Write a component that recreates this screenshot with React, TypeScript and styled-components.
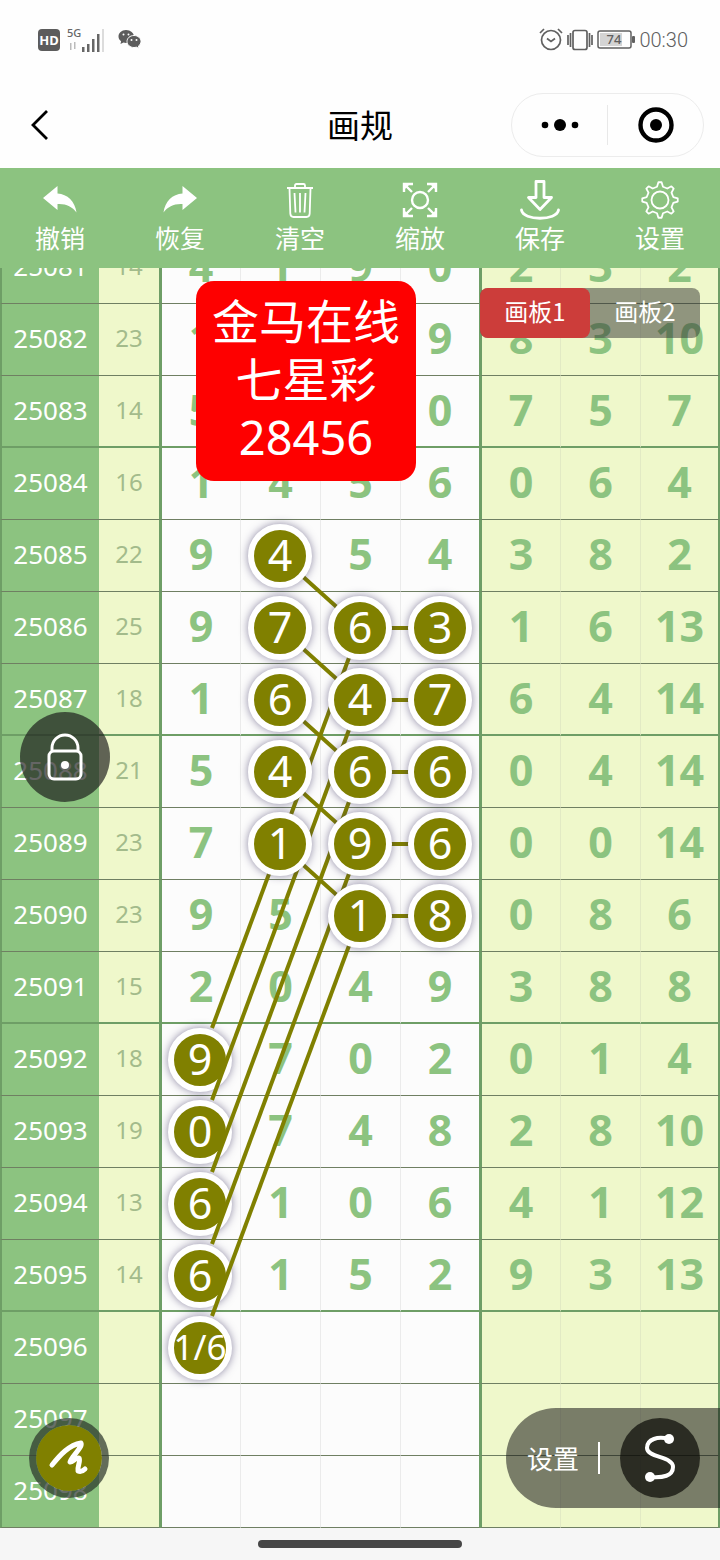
import React from "react";
import styled, { createGlobalStyle, css } from "styled-components";

const FONT = '"Noto Sans", "Noto Sans CJK SC", sans-serif';
const GREEN = "#8cc380";
const LINE = "#6e9e66";
const RULE = "#6f7f62";
const OLIVE = "#808000";
const ROW = 72;
const HIDDEN = 36;

const GlobalStyle = createGlobalStyle`
  * { box-sizing: border-box; }
  body { margin: 0; background: #f6f6f6; font-family: ${FONT}; }
  button { font: inherit; color: inherit; background: none; border: 0; padding: 0; margin: 0; cursor: pointer; }
`;

const Page = styled.div`
  min-height: 100vh;
  display: flex;
  flex-direction: column;
  background: #f6f6f6;
`;

const StatusBar = styled.header`
  height: 82px;
  padding: 0 32px 2px 38px;
  display: flex;
  align-items: center;
  justify-content: space-between;
  background: #fefefe;
  color: #606060;
`;

const StatusGroup = styled.div<{ $gap: number }>`
  display: flex;
  align-items: center;
  gap: ${(p) => p.$gap}px;
`;

const HdBadge = styled.span`
  width: 22px;
  height: 22px;
  border-radius: 4px;
  background: #5c5c5c;
  color: #fff;
  font: 700 13px/22px "Noto Sans", sans-serif;
  text-align: center;
`;

const Clock = styled.time`
  font: 300 20px/24px Roboto, sans-serif;
`;

const NavBar = styled.nav`
  height: 86px;
  padding: 0 16px;
  display: grid;
  grid-template-columns: 1fr auto 1fr;
  align-items: center;
  background: #fefefe;
`;

const BackButton = styled.button`
  && { margin-left: 8px; }
  width: 32px;
  height: 40px;
  display: flex;
  align-items: center;
  justify-content: center;
`;

const Title = styled.h1`
  margin: 0;
  padding-bottom: 2px;
  font: 400 33px/40px "Noto Sans CJK SC", sans-serif;
  color: #000;
`;

const Capsule = styled.div`
  justify-self: end;
  width: 193px;
  height: 64px;
  display: flex;
  align-items: center;
  border: 1px solid #ececec;
  border-radius: 32px;
`;

const CapsuleButton = styled.button`
  flex: 1;
  height: 40px;
  display: flex;
  align-items: center;
  justify-content: center;
  & + & { border-left: 1px solid #e8e8e8; }
`;

const Toolbar = styled.div`
  height: 100px;
  display: grid;
  grid-template-columns: repeat(6, 1fr);
  background: ${GREEN};
`;

const Tool = styled.button`
  && { color: #fff; padding-top: 11px; }
  display: flex;
  flex-direction: column;
  align-items: center;
  svg { display: block; }
  span { font: 400 25px/32px "Noto Sans CJK SC", sans-serif; }
`;

const Board = styled.main`
  position: relative;
  overflow: hidden;
`;

const Chart = styled.table`
  width: 100%;
  margin-top: -${HIDDEN}px;
  border-collapse: separate;
  border-spacing: 0;
  table-layout: fixed;
`;

const Row = styled.tr<{ $thick: boolean }>`
  > * {
    height: ${ROW}px;
    padding: 0 0 ${(p) => (p.$thick ? 2 : 3)}px;
    text-align: center;
    vertical-align: middle;
    border-bottom: ${(p) => (p.$thick ? `2px solid ${LINE}` : `1px solid ${RULE}`)};
  }
`;

const Period = styled.th`
  background: ${GREEN};
  border-left: 2px solid ${LINE};
  color: #fff;
  font: 400 26px/32px ${FONT};
`;

const Sum = styled.td`
  background: #eff8cb;
  border-right: 1px solid ${LINE};
  color: #a3bb8b;
  font: 400 24px/32px ${FONT};
`;

const Digit = styled.td<{ $col: number }>`
  background: ${(p) => (p.$col > 3 ? "#eff8cb" : "#fcfcfc")};
  color: ${GREEN};
  font: 700 43px/56px ${FONT};
  ${(p) =>
    p.$col % 4 === 0
      ? css`border-left: 2px solid ${LINE};`
      : css`border-left: 1px solid ${p.$col > 3 ? "#e2eac4" : "#ebebeb"};`}
  ${(p) => p.$col === 3 && css`border-right: 1px solid ${LINE};`}
  ${(p) => p.$col === 6 && css`border-right: 2px solid ${LINE};`}
`;

const Overlay = styled.svg`
  position: absolute;
  left: 0;
  top: 0;
  width: 100%;
  height: 100%;
  pointer-events: none;
`;

const Mark = styled.span<{ $col: number; $row: number; $small?: boolean }>`
  position: absolute;
  left: calc(100% * ${(p) => 5 + 2 * p.$col} / 18);
  top: ${(p) => p.$row * ROW}px;
  transform: translate(-50%, -50%);
  width: 64px;
  height: 64px;
  padding-bottom: 2px;
  border: 6px solid #fff;
  border-radius: 50%;
  background: ${OLIVE};
  box-shadow: 0 0 9px rgba(50, 40, 90, 0.55);
  color: #fff;
  display: flex;
  align-items: center;
  justify-content: center;
  font: 400 ${(p) => (p.$small ? 35 : 43)}px/52px ${FONT};
  white-space: nowrap;
`;

const Banner = styled.aside`
  position: absolute;
  left: calc(100% * 49 / 180);
  top: 13px;
  width: 220px;
  height: 200px;
  padding-top: 11px;
  border-radius: 18px;
  background: #fe0000;
  color: #fff;
  text-align: center;
  font: 400 47px/58px ${FONT};
  p { margin: 0; }
`;

const Tabs = styled.div`
  position: absolute;
  right: 20px;
  top: 20px;
  display: flex;
  border-radius: 8px;
  background: rgba(50, 50, 50, 0.5);
`;

const Tab = styled.button<{ $active?: boolean }>`
  && {
    width: 110px;
    height: 50px;
    border-radius: 8px;
    color: #fff;
    font: 400 24px/46px "Noto Sans CJK SC", sans-serif;
    padding-bottom: 4px;
    ${(p) => p.$active && css`background: #cc3d3a;`}
  }
`;

const LockButton = styled.button`
  && {
    position: absolute;
    left: 20px;
    top: 444px;
    width: 90px;
    height: 90px;
    border-radius: 50%;
    background: rgba(25, 25, 25, 0.67);
    display: flex;
    align-items: center;
    justify-content: center;
  }
`;

const PenButton = styled.button`
  && {
    position: absolute;
    left: 29px;
    bottom: 30px;
    width: 80px;
    height: 80px;
    border-radius: 50%;
    border: 7px solid rgba(40, 50, 40, 0.7);
    background: ${OLIVE};
    background-clip: padding-box;
    display: flex;
    align-items: center;
    justify-content: center;
  }
`;

const Dock = styled.div`
  position: absolute;
  right: 0;
  bottom: 20px;
  height: 100px;
  padding: 0 20px 0 21px;
  display: flex;
  align-items: center;
  border-radius: 50px 0 0 50px;
  background: rgba(20, 20, 20, 0.54);
`;

const DockLabel = styled.button`
  && {
    height: 32px;
    padding-right: 19px;
    margin-right: 20px;
    border-right: 2px solid #fff;
    color: #fff;
    font: 400 26px/30px "Noto Sans CJK SC", sans-serif;
  }
`;

const DockRound = styled.button`
  && {
    width: 80px;
    height: 80px;
    border-radius: 50%;
    background: rgba(10, 10, 5, 0.7);
    display: flex;
    align-items: center;
    justify-content: center;
  }
`;

const HomeArea = styled.footer`
  height: 32px;
  display: flex;
  align-items: center;
  justify-content: center;
`;

const HomeBar = styled.span`
  width: 204px;
  height: 8px;
  border-radius: 4px;
  background: #474747;
`;

const ROWS: [string, string, string][] = [
  ["25081", "14", "4 1 9 0 2 3 2"],
  ["25082", "23", "1 6 7 9 8 3 10"],
  ["25083", "14", "5 7 2 0 7 5 7"],
  ["25084", "16", "1 4 5 6 0 6 4"],
  ["25085", "22", "9 4 5 4 3 8 2"],
  ["25086", "25", "9 7 6 3 1 6 13"],
  ["25087", "18", "1 6 4 7 6 4 14"],
  ["25088", "21", "5 4 6 6 0 4 14"],
  ["25089", "23", "7 1 9 6 0 0 14"],
  ["25090", "23", "9 5 1 8 0 8 6"],
  ["25091", "15", "2 0 4 9 3 8 8"],
  ["25092", "18", "9 7 0 2 0 1 4"],
  ["25093", "19", "0 7 4 8 2 8 10"],
  ["25094", "13", "6 1 0 6 4 1 12"],
  ["25095", "14", "6 1 5 2 9 3 13"],
  ["25096", "", "      "],
  ["25097", "", "      "],
  ["25098", "", "      "],
];

/* Marks are [column, row, text]; row 4 is period 25085. */
const TARGETS: [number, number, string][] = [
  [0, 11, "9"], [0, 12, "0"], [0, 13, "6"], [0, 14, "6"], [0, 15, "1/6"],
];
const SOURCES: [number, number, string][] = [
  [1, 4, "4"], [1, 5, "7"], [1, 6, "6"], [1, 7, "4"], [1, 8, "1"],
  [2, 5, "6"], [2, 6, "4"], [2, 7, "6"], [2, 8, "9"], [2, 9, "1"],
  [3, 5, "3"], [3, 6, "7"], [3, 7, "6"], [3, 8, "6"], [3, 9, "8"],
];

/* Digits already replaced by a mark are not printed a second time under it. */
const MARKED = new Set([...TARGETS, ...SOURCES].map(([c, r]) => `${c}-${r}`));

const cx = (col: number) => `${((5 + 2 * col) * 100) / 18}%`;
const cy = (row: number) => row * ROW;

function Links() {
  return (
    <Overlay stroke={OLIVE} strokeWidth="4">
      {[0, 1, 2, 3, 4].map((i) => (
        <React.Fragment key={i}>
          <line x1={cx(1)} y1={cy(4 + i)} x2={cx(2)} y2={cy(5 + i)} />
          <line x1={cx(2)} y1={cy(5 + i)} x2={cx(3)} y2={cy(5 + i)} />
          <line x1={cx(2)} y1={cy(5 + i)} x2={cx(0.15)} y2={cy(11 + i) - 32} />
        </React.Fragment>
      ))}
    </Overlay>
  );
}

const UndoArrow = ({ flip }: { flip?: boolean }) => (
  <svg width="42" height="42" viewBox="0 0 42 42" fill="#fff">
    <path transform={flip ? "translate(42 0) scale(-1 1)" : undefined}
      d="M4 19L18.500 7v7.500c10 .5 17.500 8 19 19C33 27.500 27 24.500 18.500 25v6z" />
  </svg>
);

const TrashIcon = () => (
  <svg width="42" height="42" viewBox="0 0 42 42" fill="none" stroke="#fff" strokeWidth="1.800">
    <path d="M8 9h26M16 9V6.500q0-1.500 1.500-1.500h7q1.500 0 1.500 1.500V9M10.500 9.500l.8 25q.2 3.500 3.200 3.500h13q3 0 3.200-3.500l.8-25M15.500 14l1 19.500M21 14v19.500M26.500 14l-1 19.500" />
  </svg>
);

const ZoomIcon = () => (
  <svg width="42" height="42" viewBox="0 0 42 42" fill="none" stroke="#fff" strokeWidth="2.400">
    <circle cx="21" cy="21" r="8" />
    <path d="M5 13V5h9M5 5l8 8M28 5h9v8M37 5l-8 8M5 29v8h9M5 37l8-8M28 37h9v-8M37 37l-8-8" />
    <path d="M4 4h8l-8 8zM38 4h-8l8 8zM4 38h8l-8-8zM38 38h-8l8-8z" fill="#fff" stroke="none" />
  </svg>
);

const SaveIcon = () => (
  <svg width="42" height="42" viewBox="0 0 42 42" fill="none" stroke="#fff" strokeWidth="2.800" strokeLinejoin="round" strokeLinecap="round">
    <path d="M17 2.500h8v16h7.500L21 30.500 9.500 18.500H17zM2.500 31C4 42 38 42 39.500 31" />
  </svg>
);

const gearPath = (() => {
  const pts: string[] = [];
  for (let i = 0; i < 8; i++) {
    const a = (i * Math.PI) / 4;
    [[-0.22, 13.6], [-0.09, 17.8], [0.09, 17.8], [0.22, 13.6]].forEach(([d, r]) => {
      pts.push(`${(21 + r * Math.cos(a + d)).toFixed(2)} ${(21 + r * Math.sin(a + d)).toFixed(2)}`);
    });
  }
  return `M${pts.join("L")}Z`;
})();

const GearIcon = () => (
  <svg width="42" height="42" viewBox="0 0 42 42" fill="none" stroke="#fff" strokeWidth="1.800" strokeLinejoin="round">
    <path d={gearPath} />
    <circle cx="21" cy="21" r="8.500" />
  </svg>
);

const SignalIcon = () => (
  <svg width="40" height="28" viewBox="0 0 40 28" fill="#666">
    <text x="1" y="11" fontFamily="Noto Sans" fontSize="11" fontWeight="500">5G</text>
    <path d="M4 17h1.500v7H4zM8 16h1.500v7H8z" fill="#bbb" />
    <path d="M16 21h2.500v5h-2.500zM21 18h2.500v8h-2.500zM26 13h2.500v13h-2.500zM31 8h2.500v18h-2.500z" />
    <path d="M36 3h2v23h-2z" fill="#dcdcdc" />
  </svg>
);

const WechatIcon = () => (
  <svg width="24" height="22" viewBox="0 0 24 22" fill="#5c5c5c">
    <path d="M8 1C3.500 1 .5 4 .5 7.500c0 2 1 3.600 2.600 4.800L2.500 15l3-1.500q1.200.4 2.500.4C12.500 14 16 11 16 7.500S12.500 1 8 1z" />
    <path d="M16 6.500c-4 0-7 2.600-7 6s3 6 7 6q1.200 0 2.300-.4L21 19.500l-.6-2.400c1.600-1.100 2.600-2.700 2.600-4.600 0-3.400-3-6-7-6z" stroke="#fefefe" />
    <g fill="#fefefe"><circle cx="5.500" cy="5.500" r="1" /><circle cx="10.500" cy="5.500" r="1" /><circle cx="13.500" cy="11" r="1" /><circle cx="18.500" cy="11" r="1" /></g>
  </svg>
);

const AlarmIcon = () => (
  <svg width="24" height="24" viewBox="0 0 24 24" fill="none" stroke="#606060" strokeWidth="1.700">
    <circle cx="12" cy="12" r="9.500" />
    <path d="M8 10.500l4 3 4-3M1 5l4-4M23 5l-4-4" />
  </svg>
);

const VibrateIcon = () => (
  <svg width="26" height="22" viewBox="0 0 26 22" fill="none" stroke="#606060" strokeWidth="1.700">
    <rect x="6" y="1.500" width="14" height="19" rx="2" />
    <path d="M3.500 4v14M22.500 4v14M1 6v10M25 6v10" />
  </svg>
);

const BatteryIcon = () => (
  <svg width="38" height="20" viewBox="0 0 38 20">
    <rect x="1" y="1" width="33" height="17" rx="2" fill="none" stroke="#606060" strokeWidth="1.500" />
    <rect x="3" y="3" width="22" height="13" fill="#d4d4d4" />
    <rect x="35" y="6" width="3" height="7" rx="1" fill="#606060" />
    <text x="17" y="14" textAnchor="middle" fontFamily="Noto Sans" fontSize="13" fontWeight="500" fill="#606060">74</text>
  </svg>
);

export default function App() {
  return (
    <Page>
      <GlobalStyle />
      <StatusBar>
        <StatusGroup $gap={12}>
          <StatusGroup $gap={6}>
            <HdBadge>HD</HdBadge>
            <SignalIcon />
          </StatusGroup>
          <WechatIcon />
        </StatusGroup>
        <StatusGroup $gap={4}>
          <AlarmIcon />
          <VibrateIcon />
          <BatteryIcon />
          <Clock>00:30</Clock>
        </StatusGroup>
      </StatusBar>
      <NavBar>
        <BackButton aria-label="返回">
          <svg width="20" height="32" viewBox="0 0 20 32" fill="none" stroke="#000" strokeWidth="2.800">
            <path d="M17 2L3 16l14 14" />
          </svg>
        </BackButton>
        <Title>画规</Title>
        <Capsule>
          <CapsuleButton aria-label="更多">
            <svg width="40" height="12" viewBox="0 0 40 12">
              <circle cx="5" cy="6" r="3.300" /><circle cx="20" cy="6" r="6" /><circle cx="35" cy="6" r="3.300" />
            </svg>
          </CapsuleButton>
          <CapsuleButton aria-label="关闭">
            <svg width="36" height="36" viewBox="0 0 36 36">
              <circle cx="18" cy="18" r="15.500" fill="none" stroke="#000" strokeWidth="4.400" />
              <circle cx="18" cy="18" r="6" />
            </svg>
          </CapsuleButton>
        </Capsule>
      </NavBar>
      <Toolbar>
        <Tool><UndoArrow /><span>撤销</span></Tool>
        <Tool><UndoArrow flip /><span>恢复</span></Tool>
        <Tool><TrashIcon /><span>清空</span></Tool>
        <Tool><ZoomIcon /><span>缩放</span></Tool>
        <Tool><SaveIcon /><span>保存</span></Tool>
        <Tool><GearIcon /><span>设置</span></Tool>
      </Toolbar>
      <Board>
        <Chart>
          <colgroup>
            <col style={{ width: "13.75%" }} />
            <col style={{ width: "8.472%" }} />
            {[0, 1, 2, 3, 4, 5, 6].map((i) => <col key={i} />)}
          </colgroup>
          <tbody>
            {ROWS.map(([period, sum, digits], r) => (
              <Row key={period} $thick={r % 4 === 2}>
                <Period scope="row">{period}</Period>
                <Sum>{sum}</Sum>
                {digits.split(" ").map((d, c) => (
                  <Digit key={c} $col={c}>{MARKED.has(`${c}-${r}`) ? "" : d}</Digit>
                ))}
              </Row>
            ))}
          </tbody>
        </Chart>
        {TARGETS.map(([c, r, t]) => <Mark key={r} $col={c} $row={r} $small={t.length > 1}>{t}</Mark>)}
        <Links />
        {SOURCES.map(([c, r, t]) => <Mark key={`${c}-${r}`} $col={c} $row={r}>{t}</Mark>)}
        <Banner><p>金马在线</p><p>七星彩</p><p>28456</p></Banner>
        <Tabs>
          <Tab $active>画板1</Tab>
          <Tab>画板2</Tab>
        </Tabs>
        <LockButton aria-label="锁定">
          <svg width="40" height="52" viewBox="0 0 40 52" fill="none" stroke="#fff" strokeWidth="3">
            <rect x="4" y="20" width="32" height="28" rx="5" />
            <path d="M7 20v-3a13 13 0 0 1 26 0v3" />
            <circle cx="20" cy="34" r="4" fill="#fff" stroke="none" />
          </svg>
        </LockButton>
        <PenButton aria-label="画笔">
          <svg width="48" height="48" viewBox="0 0 48 48" fill="none" stroke="#fff" strokeWidth="5" strokeLinecap="round" strokeLinejoin="round">
            <path d="M7 31C15 21 24 11 36 9C38 13 27 22 25 28C27 29 31 23 34 24C36 27 32 33 33 37C35 38 38 37 40 35" />
          </svg>
        </PenButton>
        <Dock>
          <DockLabel>设置</DockLabel>
          <DockRound aria-label="曲线">
            <svg width="40" height="56" viewBox="0 0 40 56" fill="none" stroke="#fff" strokeWidth="4">
              <path d="M29 9C18 6 7 9 7 18c0 10 26 8 26 19 0 9-10 11-23 10" />
              <circle cx="29" cy="9" r="5" fill="#fff" stroke="none" />
              <circle cx="10" cy="47" r="5" fill="#fff" stroke="none" />
            </svg>
          </DockRound>
        </Dock>
      </Board>
      <HomeArea><HomeBar /></HomeArea>
    </Page>
  );
}
